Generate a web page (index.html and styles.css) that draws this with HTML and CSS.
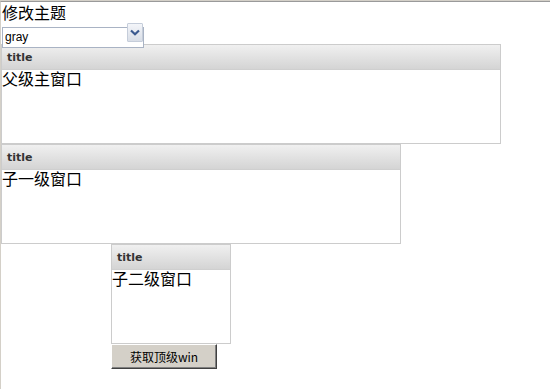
FILE: index.html
```html
<!DOCTYPE html>
<html lang="zh">
<head>
<meta charset="utf-8">
<title>修改主题</title>
<link rel="stylesheet" href="styles.css">
</head>
<body>
<div class="frame">
  <div class="page">
    <div class="label">修改主题</div>
    <div class="select-wrap">
      <select class="theme-select">
        <option>gray</option>
        <option>default</option>
      </select>
      <span class="select-btn"><svg width="10" height="7" viewBox="0 0 10 7"><path d="M1 1.5 L5 5.2 L9 1.5" fill="none" stroke="#3b5a8f" stroke-width="2.2"/></svg></span>
    </div>
    <div class="win win-main">
      <div class="win-head">title</div>
      <div class="win-body">父级主窗口</div>
    </div>
    <div class="win win-child">
      <div class="win-head">title</div>
      <div class="win-body">子一级窗口</div>
    </div>
    <div class="win win-sub">
      <div class="win-head">title</div>
      <div class="win-body">子二级窗口</div>
    </div>
    <button class="btn">获取顶级win</button>
  </div>
</div>
</body>
</html>
```
FILE: styles.css
```css
html, body {
  margin: 0;
  padding: 0;
  background: #fff;
}
.frame {
  border-top: 1px solid #d4d0c8;
  height: 389px;
  box-sizing: border-box;
  overflow: hidden;
}
.page {
  border-top: 1px solid #9a9a9a;
  border-left: 1px solid #d4d0c8;
  height: 100%;
  box-sizing: border-box;
  font-family: "Noto Sans CJK SC", "DejaVu Sans", sans-serif;
  color: #000;
}
.label {
  font-size: 16px;
  line-height: 20px;
  height: 20px;
  padding-left: 1px;
}
.select-wrap {
  position: relative;
  width: 142px;
  height: 21px;
  margin-left: 1px;
  margin-bottom: 1px;
}
.theme-select {
  -webkit-appearance: none;
  appearance: none;
  width: 142px;
  height: 21px;
  box-sizing: border-box;
  border: 1px solid #a9b3c4;
  background: #fff;
  font-family: "Liberation Sans", Arial, sans-serif;
  font-size: 12px;
  color: #000;
  padding: 0 0 0 2px;
  margin: 0;
  border-radius: 0;
  outline: none;
}
.select-btn {
  position: absolute;
  right: 1px;
  top: 1px;
  width: 16px;
  height: 19px;
  box-sizing: border-box;
  border: 1px solid #c5cdda;
  border-radius: 1px;
  background: linear-gradient(#f3f5f9, #d9dee7);
  display: flex;
  align-items: center;
  justify-content: center;
  pointer-events: none;
}
.win {
  border: 1px solid #cccccc;
  height: 100px;
  box-sizing: border-box;
  background: #fff;
  display: flex;
  flex-direction: column;
}
.win-main { width: 500px; }
.win-child { width: 400px; }
.win-sub { width: 120px; margin-left: 110px; }
.win-head {
  height: 25px;
  box-sizing: border-box;
  border-bottom: 1px solid #cfcfcf;
  background: linear-gradient(#f0f0f0, #d4d4d4);
  font-family: "DejaVu Sans", Verdana, sans-serif;
  font-weight: bold;
  font-size: 11px;
  color: #333;
  line-height: 25px;
  padding-left: 5px;
}
.win-body {
  font-size: 16px;
  line-height: 17px;
  padding-left: 0;
}
.btn {
  display: block;
  margin: 0 0 0 110px;
  width: 106px;
  height: 25px;
  box-sizing: border-box;
  background: #d4d0c8;
  border: 1px solid;
  border-color: #ffffff #404040 #404040 #ffffff;
  box-shadow: inset -1px -1px 0 #808080;
  font-family: "Noto Sans CJK SC", "Liberation Sans", sans-serif;
  font-size: 12px;
  color: #000;
  padding: 0;
  border-radius: 0;
}
```
